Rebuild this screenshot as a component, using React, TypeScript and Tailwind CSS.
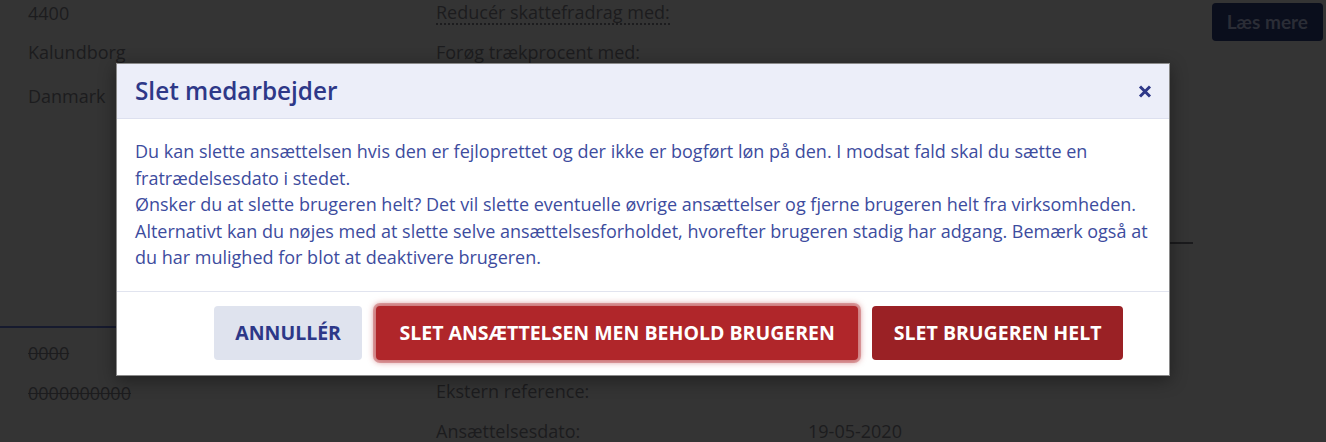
import React from 'react';

const font = { fontFamily: '"Open Sans", "Liberation Sans", sans-serif' };

const CloseIcon = () => (
  <svg width="14" height="13" viewBox="0 0 14 13" fill="none">
    <path d="M2 1.5l10 10M12 1.5l-10 10" stroke="#2e3888" strokeWidth="3" strokeLinecap="butt" />
  </svg>
);

const Background = () => {
  return (
    <div className="flex flex-col text-[18px] leading-[24px] text-[#1c1c1e]">
      {/* top block */}
      <div className="flex h-[242px]">
        <div className="w-[436px] pl-[28px] pt-[1px] flex flex-col">
          <div>4400</div>
          <div className="mt-[15px]">Kalundborg</div>
          <div className="mt-[20px]">Danmark</div>
        </div>
        <div className="w-[372px] pt-[1px] flex flex-col">
          <div className="self-start border-b-2 border-dotted border-[#1c1c1e] leading-[22px]">Reducér skattefradrag med:</div>
          <div className="mt-[15px]">Forøg trækprocent med:</div>
        </div>
        <div className="flex-1 flex justify-end pr-[3px] pt-[3px]">
          <div
            className="h-[38px] px-[15px] rounded-[4px] bg-[#0a0e1c] text-[#2b2d36] font-bold text-[19px] flex items-center"
            style={{ fontFamily: 'Lato, "Open Sans", sans-serif' }}
          >
            Læs mere
          </div>
        </div>
      </div>
      <div className="ml-[808px] w-[385px] h-[2px] bg-[#1a1a1c]" />
      <div className="h-[82px]" />
      <div className="w-[420px] h-[2px] bg-[#161a2e]" />
      {/* lower block */}
      <div className="flex">
        <div className="w-[436px] pl-[28px] flex flex-col">
          <div className="mt-[13px] line-through">0000</div>
          <div className="mt-[16px] line-through">0000000000</div>
        </div>
        <div className="w-[372px] flex flex-col">
          <div className="mt-[51px]">Ekstern reference:</div>
          <div className="mt-[16px]">Ansættelsesdato:</div>
        </div>
        <div className="flex flex-col">
          <div className="mt-[91px]">19-05-2020</div>
        </div>
      </div>
    </div>
  );
};

const Modal = () => {
  return (
    <div className="absolute left-[116px] top-[63px] w-[1054px] bg-white border border-[#8a8a8a] shadow-[0_4px_16px_rgba(0,0,0,0.4)]">
      <div className="h-[55px] bg-[#eceef9] border-b border-[#dde0ef] flex items-center justify-between pl-[18px] pr-[17px]">
        <h2 className="text-[24.3px] font-semibold text-[#2e3888]">Slet medarbejder</h2>
        <button className="flex items-center">
          <CloseIcon />
        </button>
      </div>
      <div className="pl-[18px] pt-[19px] pb-[20px] text-[18px] leading-[26.5px] text-[#3d4c9e] whitespace-nowrap">
        <p>
          Du kan slette ansættelsen hvis den er fejloprettet og der ikke er bogført løn på den. I modsat fald skal du sætte en
          <br />
          fratrædelsesdato i stedet.
        </p>
        <p>
          Ønsker du at slette brugeren helt? Det vil slette eventuelle øvrige ansættelser og fjerne brugeren helt fra virksomheden.
          <br />
          Alternativt kan du nøjes med at slette selve ansættelsesforholdet, hvorefter brugeren stadig har adgang. Bemærk også at
          <br />
          du har mulighed for blot at deaktivere brugeren.
        </p>
      </div>
      <div className="border-t border-[#e1e4ef] pt-[14px] pb-[15px] pr-[46px] flex justify-end gap-[14px]">
        <button className="h-[54px] px-[21px] rounded-[4px] bg-[#dfe3ee] text-[#2d3888] font-bold text-[19.5px]">
          ANNULLÉR
        </button>
        <button className="h-[54px] px-[23.5px] rounded-[4px] bg-[#b0262a] text-white font-bold text-[19.5px] shadow-[0_0_0_3px_rgba(176,38,42,0.35),0_0_6px_2px_rgba(176,38,42,0.55)]">
          SLET ANSÆTTELSEN MEN BEHOLD BRUGEREN
        </button>
        <button className="h-[54px] px-[21.5px] rounded-[4px] bg-[#9a2125] text-white font-bold text-[19.5px]">
          SLET BRUGEREN HELT
        </button>
      </div>
    </div>
  );
};

export default function App() {
  return (
    <div className="relative w-[1326px] h-[442px] overflow-hidden bg-[#343434]" style={font}>
      <Background />
      <Modal />
    </div>
  );
}
